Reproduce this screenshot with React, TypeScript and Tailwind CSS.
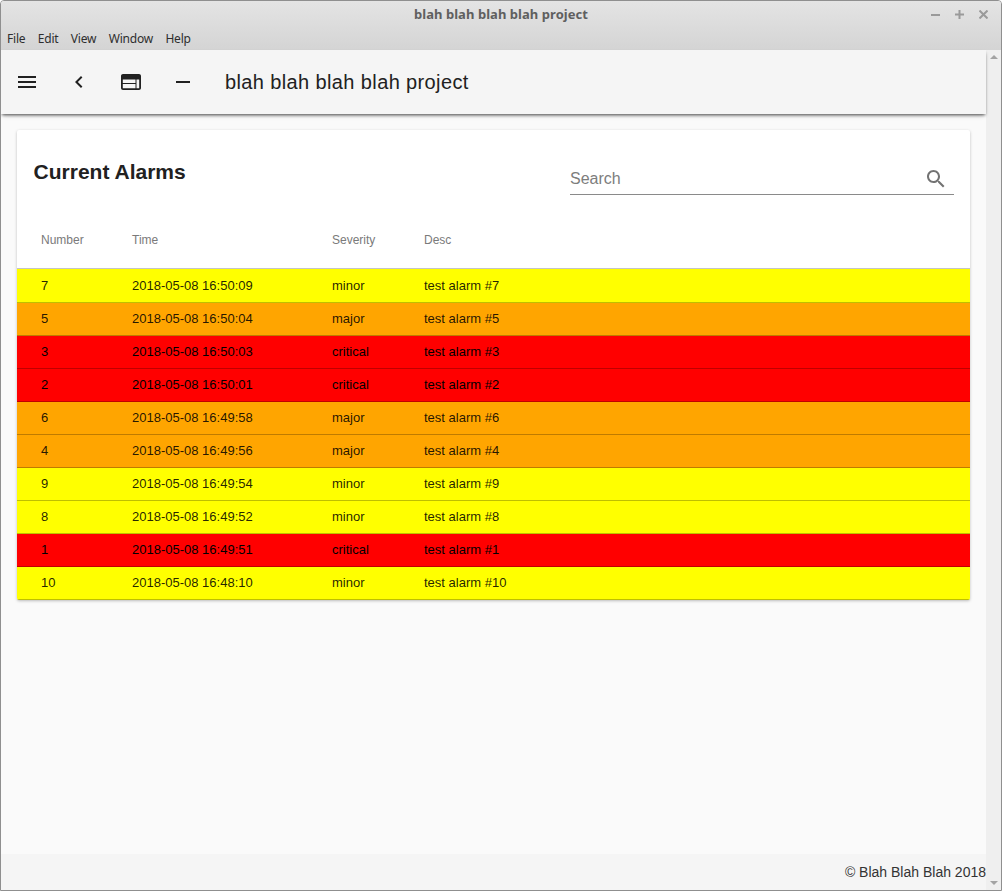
const rows = [
  { n: 7, t: "2018-05-08 16:50:09", s: "minor" },
  { n: 5, t: "2018-05-08 16:50:04", s: "major" },
  { n: 3, t: "2018-05-08 16:50:03", s: "critical" },
  { n: 2, t: "2018-05-08 16:50:01", s: "critical" },
  { n: 6, t: "2018-05-08 16:49:58", s: "major" },
  { n: 4, t: "2018-05-08 16:49:56", s: "major" },
  { n: 9, t: "2018-05-08 16:49:54", s: "minor" },
  { n: 8, t: "2018-05-08 16:49:52", s: "minor" },
  { n: 1, t: "2018-05-08 16:49:51", s: "critical" },
  { n: 10, t: "2018-05-08 16:48:10", s: "minor" },
];

const bg: Record<string, string> = {
  minor: "bg-[#ffff00] text-[rgba(0,0,0,0.87)]",
  major: "bg-[#ffa500] text-[rgba(0,0,0,0.87)]",
  critical: "bg-[#ff0000] text-black",
};

function Icon({ d, className }: { d: string; className: string }) {
  return (
    <svg viewBox="0 0 24 24" className={className} fill="currentColor" fillRule="evenodd">
      <path d={d} />
    </svg>
  );
}

export default function App() {
  return (
    <div className="flex h-[891px] w-[1002px] flex-col overflow-hidden rounded-t-[4px] border border-[#8f8f8f] bg-[#fafafa] font-['Liberation_Sans',sans-serif] text-[#212121]">
      {/* Window chrome */}
      <div className="h-[49px] shrink-0 bg-gradient-to-b from-[#e4e4e4] to-[#d4d4d4] font-['Noto_Sans',sans-serif]">
        <div className="relative flex h-[27px] items-center justify-center text-[13px] font-bold tracking-[0.05px] text-[#5f5f5f]">
          blah blah blah blah project
          <div className="absolute right-[13px] top-[9px] flex items-center gap-[15px] text-[#9a9a9a]">
            <svg width="9" height="9" viewBox="0 0 9 9" fill="currentColor"><rect x="0" y="4" width="9" height="2" /></svg>
            <svg width="9" height="9" viewBox="0 0 9 9" fill="currentColor"><rect x="0" y="3.5" width="9" height="2" /><rect x="3.5" y="0" width="2" height="9" /></svg>
            <svg width="9" height="9" viewBox="0 0 9 9" stroke="currentColor" strokeWidth="2"><path d="M0.5 0.5L8.5 8.5M8.5 0.5L0.5 8.5" /></svg>
          </div>
        </div>
        <div className="flex h-[22px] items-center gap-[12.4px] pl-[6px] text-[12px] tracking-[-0.2px] text-[#2e2e2e]">
          <span>File</span>
          <span>Edit</span>
          <span>View</span>
          <span>Window</span>
          <span>Help</span>
        </div>
      </div>

      <div className="flex min-h-0 flex-1">
        <div className="flex min-w-0 flex-1 flex-col">
          {/* App bar */}
          <div className="relative z-10 flex h-[64px] shrink-0 items-center bg-[#f5f5f5] shadow-[0_2px_3px_-1px_rgba(0,0,0,0.6),0_3px_5px_-2px_rgba(0,0,0,0.25)]">
            <div className="flex w-[224px] shrink-0 items-center pl-[14px] text-[#212121]">
              <Icon className="h-6 w-6" d="M3 18h18v-2H3v2zm0-5h18v-2H3v2zm0-7v2h18V6H3z" />
              <Icon className="ml-[28px] h-6 w-6" d="M15.41 7.41L14 6l-6 6 6 6 1.41-1.41L10.83 12z" />
              <Icon className="ml-[28px] h-6 w-6" d="M4 4h16c1.100 0 2 .9 2 2v12c0 1.100-.9 2-2 2H4c-1.100 0-2-.9-2-2V6c0-1.100.9-2 2-2zM3.800 9.500V13h12.700V9.500H3.800zM3.800 14v4.200h12.700V14H3.800zM17.500 9.500v8.700h2.700V9.500h-2.700z" />
              <Icon className="ml-[28px] h-6 w-6" d="M5 11h14v2H5z" />
            </div>
            <div className="text-[20px] tracking-[0.38px]">blah blah blah blah project</div>
          </div>

          {/* Content */}
          <div className="min-h-0 flex-1 pl-4 pr-4 pt-4">
            <div className="w-[953px] overflow-hidden rounded-[2px] bg-white shadow-[0_1px_3px_rgba(0,0,0,0.25)]">
              <div className="flex h-[82px] items-start justify-between pl-[16.600px] pr-4 pt-[28px]">
                <div className="text-[21px] font-bold leading-[28px]">Current Alarms</div>
                <div className="flex h-[37px] w-[384px] items-center justify-between border-b border-[#8a8a8a] pt-[5px] pr-[6px]">
                  <span className="text-[16px] text-[#7d7d7d]">Search</span>
                  <Icon className="h-6 w-6 text-[#737373]" d="M15.5 14h-.79l-.28-.27C15.41 12.59 16 11.11 16 9.500 16 5.910 13.090 3 9.500 3S3 5.910 3 9.500 5.910 16 9.500 16c1.610 0 3.090-.59 4.230-1.570l.27.28v.79l5 4.990L20.490 19l-4.990-5zm-6 0C7.010 14 5 11.990 5 9.500S7.010 5 9.500 5 14 7.010 14 9.500 11.990 14 9.500 14z" />
                </div>
              </div>
              <table className="w-full table-fixed border-separate border-spacing-0 text-[13px]">
                <thead>
                  <tr className="text-[12px] text-[#7a7a7a]">
                    <th className="h-[57px] w-[115px] border-b border-[#c4c4c4] pl-6 text-left font-normal">Number</th>
                    <th className="h-[57px] w-[200px] border-b border-[#c4c4c4] text-left font-normal">Time</th>
                    <th className="h-[57px] w-[92px] border-b border-[#c4c4c4] text-left font-normal">Severity</th>
                    <th className="h-[57px] border-b border-[#c4c4c4] text-left font-normal">Desc</th>
                  </tr>
                </thead>
                <tbody>
                  {rows.map((r, i) => {
                    const cell = `${i === 0 ? "h-[34px]" : "h-[33px]"} border-b border-[rgba(0,0,0,0.25)] ${bg[r.s]}`;
                    return (
                      <tr key={r.n}>
                        <td className={`${cell} pl-6`}>{r.n}</td>
                        <td className={cell}>{r.t}</td>
                        <td className={cell}>{r.s}</td>
                        <td className={cell}>test alarm #{r.n}</td>
                      </tr>
                    );
                  })}
                </tbody>
              </table>
            </div>
          </div>

          {/* Footer */}
          <div className="flex h-[36px] shrink-0 items-center justify-end bg-[#f5f5f5] text-[14px] text-[#333333]">
            © Blah Blah Blah 2018
          </div>
        </div>

        {/* Scrollbar */}
        <div className="flex w-[15px] shrink-0 flex-col items-center justify-between bg-[#efefef] py-[5px]">
          <div className="h-0 w-0 border-x-[4px] border-b-[4px] border-x-transparent border-b-[#a3a3a3]" />
          <div className="h-0 w-0 border-x-[4px] border-t-[4px] border-x-transparent border-t-[#a3a3a3]" />
        </div>
      </div>
    </div>
  );
}
